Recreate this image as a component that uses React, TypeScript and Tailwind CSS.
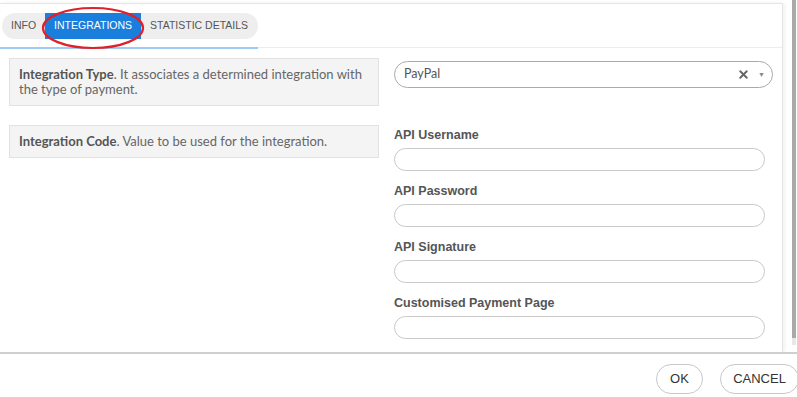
import { X } from "lucide-react";

const fields = ["API Username", "API Password", "API Signature", "Customised Payment Page"];

function Tabs() {
  return (
    <div className="relative px-[2px] pt-[9px]">
      <div className="flex h-[26px] w-[256px] items-center rounded-full bg-[#eeeeee] text-[10.5px] text-[#555] font-['Liberation_Sans',Arial,sans-serif]">
        <div className="flex h-full items-center px-[9px]">INFO</div>
        <div className="flex h-full items-center bg-[#1a7fdc] px-[9px] text-white">INTEGRATIONS</div>
        <div className="flex h-full items-center px-[9px]">STATISTIC DETAILS</div>
      </div>
      <div className="mt-[8px] -mx-[2px] flex h-[2px]">
        <div className="w-[258px] bg-[#9dcbf3]" />
        <div className="flex-1 border-t border-[#ececec]" />
      </div>
      {/* red annotation ellipse */}
      <svg className="absolute left-[40px] top-[2px]" width="106" height="44" viewBox="0 0 106 44">
        <ellipse cx="53" cy="22" rx="50" ry="20" fill="none" stroke="#e0202a" strokeWidth="2.2" />
      </svg>
    </div>
  );
}

function Description({ title, text }: { title: string; text: string }) {
  return (
    <div className="border border-[#e2e2e2] bg-[#f4f4f4] px-[9px] py-[8px] text-[13px] leading-[15px] text-[#666] font-['Lato',sans-serif]">
      <span className="font-bold text-[#555]">{title}</span>. {text}
    </div>
  );
}

export default function App() {
  return (
    <div className="flex h-[397px] w-[797px] flex-col overflow-hidden bg-white">
      <div className="flex h-[352px]">
        <div className="mt-[3px] w-[783px] border-t border-r border-[#e6e6e6] shadow-[2px_0_4px_rgba(0,0,0,0.06)]">
          <Tabs />
          <div className="flex pt-[9px]">
            <div className="flex w-[370px] ml-[9px] flex-col gap-[19px]">
              <Description
                title="Integration Type"
                text="It associates a determined integration with the type of payment."
              />
              <Description title="Integration Code" text="Value to be used for the integration." />
            </div>
            <div className="ml-[15px] flex w-[379px] flex-col">
              <div className="mt-[3px] flex h-[27px] items-center rounded-full border border-[#aaa] pl-[9px] pr-[7px] text-[12.5px] text-[#555] font-['Lato',sans-serif]">
                <span className="flex-1">PayPal</span>
                <X size={13} strokeWidth={3.5} className="text-[#666] mr-[8px]" />
                <span className="text-[7px] text-[#888]">▼</span>
              </div>
              <div className="mt-[39px] flex flex-col gap-[12px]">
                {fields.map((f) => (
                  <div key={f} className="flex flex-col">
                    <label className="mb-[5px] text-[12.5px] font-bold leading-[16px] text-[#555] font-['Liberation_Sans',Arial,sans-serif]">
                      {f}
                    </label>
                    <div className="h-[23px] w-[371px] rounded-full border border-[#c8c8c8]" />
                  </div>
                ))}
              </div>
            </div>
          </div>
        </div>
        <div className="ml-auto mr-[1px] flex w-[4px] flex-col pb-[7px]">
          <div className="h-[338px] bg-[#a9a9a9]" />
          <div className="flex-1 bg-[#e8e8e8]" />
        </div>
      </div>
      <div className="flex flex-1 items-start justify-end gap-[17px] border-t-2 border-[#cfcfcf] pt-[10px] text-[13px] text-[#333] font-['Liberation_Sans',Arial,sans-serif]">
        <button className="h-[30px] w-[47px] rounded-full border border-[#c8c8c8]">OK</button>
        <button className="-mr-[2px] h-[30px] w-[79px] rounded-full border border-[#c8c8c8]">CANCEL</button>
      </div>
    </div>
  );
}
